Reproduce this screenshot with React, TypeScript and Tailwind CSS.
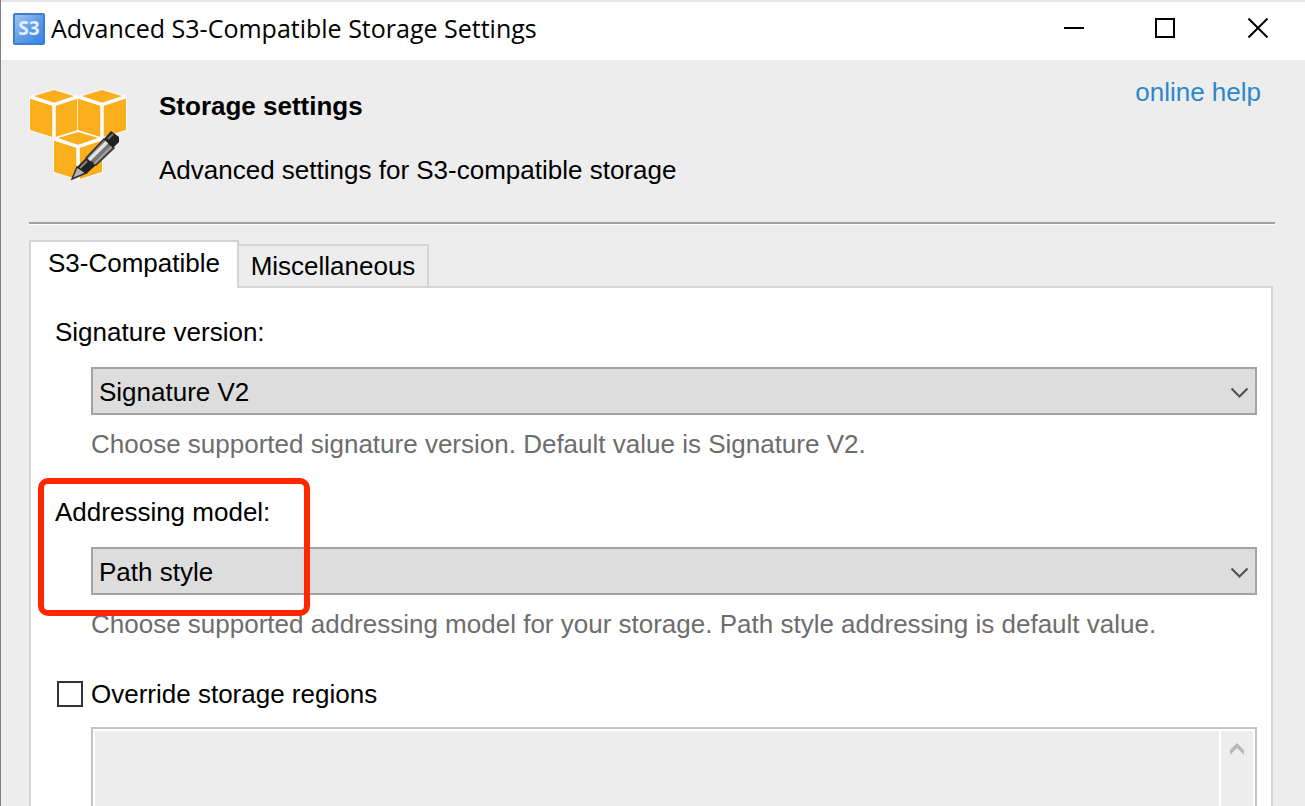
import { useState, type ReactNode } from "react";

function AppIcon() {
  return (
    <svg width="32" height="32" viewBox="0 0 32 32" aria-hidden="true">
      <defs>
        <linearGradient id="badge" x1="0" y1="0" x2="1" y2="1">
          <stop offset="0" stopColor="#a9c8f0" />
          <stop offset="0.5" stopColor="#5f9de8" />
          <stop offset="1" stopColor="#2f83ea" />
        </linearGradient>
      </defs>
      <rect x="1" y="1" width="30" height="30" rx="1" fill="url(#badge)" stroke="#3f7fd0" strokeWidth="2" />
      <text x="16" y="22" textAnchor="middle" fontFamily="Open Sans, sans-serif" fontWeight="700" fontSize="19" fill="#e4effd">
        S3
      </text>
    </svg>
  );
}

function Cube({ x, y }: { x: number; y: number }) {
  return (
    <g transform={`translate(${x} ${y})`}>
      <path d="M-1 6 L24 -1 L49 6 V41 L24 48 L-1 41 Z" fill="#fff" opacity="0.7" />
      <path d="M4 6 L24 0 L44 6 L24 13 Z" fill="#fbaf1d" />
      <path d="M0 8 L22.5 16 V47 L0 40 Z" fill="#fbaf1d" />
      <path d="M48 8 L25.5 16 V47 L48 40 Z" fill="#fbaf1d" />
      <path d="M0 7 L24 14.5 L48 7 M24 14.5 V48" fill="none" stroke="#fff" strokeWidth="3" />
    </g>
  );
}

function StorageIcon() {
  return (
    <svg width="98" height="92" viewBox="0 0 98 92" aria-hidden="true">
      <Cube x={1} y={1} />
      <Cube x={49} y={1} />
      <Cube x={25} y={43} />
      <path d="M43 90 L48 78 L57 84 Z" fill="#b5b5b5" stroke="#333" strokeWidth="1.5" />
      <path d="M48 78 L57 69 L67 76 L57 85 Z" fill="#222" />
      <path d="M57 69 L75 50 L85 59 L67 76 Z" fill="#777" stroke="#333" strokeWidth="1.5" />
      <path d="M60 71 L78 53" stroke="#e2e2e2" strokeWidth="3.5" />
      <path d="M65 75 L83 57" stroke="#aaa" strokeWidth="1.5" />
      <path d="M51 79 L58 72" stroke="#888" strokeWidth="2" />
      <path d="M75 50 L82 42 L90 48 V53 L84 59 Z" fill="#222" />
      <path d="M79 50 L84 45" stroke="#777" strokeWidth="2" />
    </svg>
  );
}

function TitleBar() {
  return (
    <header className="flex h-[60px] shrink-0 items-center border-t-2 border-[#e6e6e6] bg-white pb-1 pl-3">
      <AppIcon />
      <h1 className="ml-1.5 grow pb-0.5 font-['Open_Sans',sans-serif] text-[25px] leading-[30px]">
        Advanced S3-Compatible Storage Settings
      </h1>
      <div className="flex pb-0.5">
        <button type="button" aria-label="Minimize" className="flex h-[52px] w-[91px] items-center justify-center">
          <svg width="20" height="20" viewBox="0 0 20 20">
            <path d="M0 10H20" stroke="#000" strokeWidth="2" />
          </svg>
        </button>
        <button type="button" aria-label="Maximize" className="flex h-[52px] w-[91px] items-center justify-center">
          <svg width="20" height="20" viewBox="0 0 20 20">
            <rect x="1" y="1" width="18" height="18" fill="none" stroke="#000" strokeWidth="2" />
          </svg>
        </button>
        <button type="button" aria-label="Close" className="flex h-[52px] w-[95px] items-center justify-center">
          <svg width="20" height="20" viewBox="0 0 20 20">
            <path d="M0.5 0.5L19.5 19.5M19.5 0.5L0.5 19.5" stroke="#000" strokeWidth="2" />
          </svg>
        </button>
      </div>
    </header>
  );
}

type FieldProps = {
  id: string;
  label: string;
  options: string[];
  hint: string;
  children?: ReactNode;
};

function SelectField({ id, label, options, hint, children }: FieldProps) {
  return (
    <div className="relative">
      <label htmlFor={id} className="block">{label}</label>
      <div className="mt-5 ml-9 grid items-center">
        <select
          id={id}
          className="col-start-1 row-start-1 h-12 w-full appearance-none border-2 border-[#a3a3a3] bg-[#dddddd] px-1.5 pt-0.5 outline-none"
        >
          {options.map((option) => (
            <option key={option}>{option}</option>
          ))}
        </select>
        <svg className="pointer-events-none col-start-1 row-start-1 mt-1 mr-2 justify-self-end" width="18" height="12" viewBox="0 0 18 12">
          <path d="M0.5 1.5L8.5 9.5L16.5 1.5" fill="none" stroke="#505050" strokeWidth="2" />
        </svg>
      </div>
      <p className="mt-3.5 ml-9 text-[#6d6d6d]">{hint}</p>
      {children}
    </div>
  );
}

export default function App() {
  const [override, setOverride] = useState(false);

  return (
    <div className="flex h-screen flex-col overflow-hidden border-l border-[#808080] bg-[#ededed] font-['Liberation_Sans',Arial,sans-serif] text-[26px] leading-[30px] text-black">
      <TitleBar />
      <section className="mr-[30px] ml-7 flex h-[164px] shrink-0 items-start border-b-2 border-[#a0a0a0] pt-[29px] shadow-[0_1px_0_#fff]">
        <StorageIcon />
        <div className="ml-8 grow pt-0.5">
          <h2 className="font-bold">Storage settings</h2>
          <p className="mt-[34px]">Advanced settings for S3-compatible storage</p>
        </div>
        <a href="#help" className="mr-3.5 -mt-3 text-[#2b88cc]">online help</a>
      </section>

      <div role="tablist" className="z-10 mt-4 -mb-0.5 ml-7 flex h-12 shrink-0 items-end">
        <button type="button" role="tab" aria-selected="true" className="h-12 w-[210px] border-2 border-b-0 border-[#d4d4d4] bg-white pb-1">
          S3-Compatible
        </button>
        <button type="button" role="tab" aria-selected="false" className="h-11 w-[190px] border-2 border-l-0 border-[#d4d4d4] bg-[#ededed]">
          Miscellaneous
        </button>
      </div>

      <main className="mr-8 ml-7 flex grow flex-col border-2 border-b-0 border-[#d4d4d4] bg-white pt-[29px] pr-3.5 pl-6">
        <SelectField
          id="signature"
          label="Signature version:"
          options={["Signature V2", "Signature V4"]}
          hint="Choose supported signature version. Default value is Signature V2."
        />
        <div className="mt-[38px]">
          <SelectField
            id="addressing"
            label="Addressing model:"
            options={["Path style", "Virtual host style"]}
            hint="Choose supported addressing model for your storage. Path style addressing is default value."
          >
            <div className="pointer-events-none absolute -top-[19px] -left-[17px] h-[138px] w-[272px] rounded-[10px] border-6 border-[#ff2600]" />
          </SelectField>
        </div>
        <div className="mt-10 flex items-center gap-2">
          <input
            id="override"
            type="checkbox"
            checked={override}
            onChange={(e) => setOverride(e.target.checked)}
            className="ml-0.5 size-[26px] appearance-none border-2 border-[#333] bg-white checked:bg-[#333]"
          />
          <label htmlFor="override">Override storage regions</label>
        </div>
        <div className="mt-[18px] ml-9 flex grow border-2 border-b-0 border-[#c3c3c3] bg-white px-0.5 pt-0.5">
          <textarea aria-label="Storage regions" disabled={!override} className="grow resize-none bg-[#ededed] p-1 outline-none" />
          <button type="button" aria-label="Scroll up" className="ml-0.5 flex w-8 items-start justify-center bg-[#ededed] pt-3">
            <svg width="14" height="12" viewBox="0 0 14 12">
              <path d="M0 12V7L7 0L14 7V12L7 5Z" fill="#b8b8b8" />
            </svg>
          </button>
        </div>
      </main>
    </div>
  );
}
